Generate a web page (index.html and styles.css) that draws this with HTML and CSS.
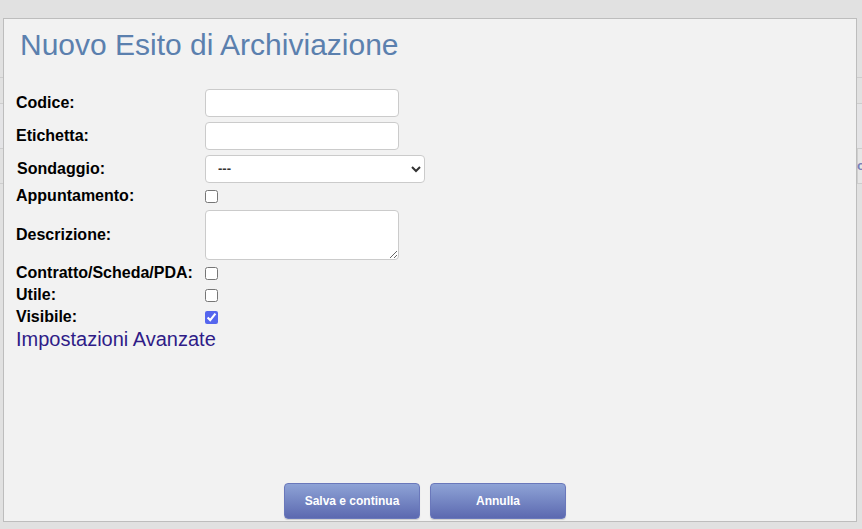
FILE: index.html
```html
<!DOCTYPE html>
<html lang="it">
<head>
<meta charset="utf-8">
<title>Nuovo Esito di Archiviazione</title>
<link rel="stylesheet" href="styles.css">
</head>
<body>
<div class="backdrop">
  <div class="bg-row r1"></div>
  <div class="bg-row r2"></div>
  <div class="bg-row r3"><span class="bg-text">o</span></div>
  <div class="bg-row r4"></div>
</div>

<div class="dialog">
  <h1 class="title">Nuovo Esito di Archiviazione</h1>
  <form class="form">
    <div class="row r-input">
      <label class="lbl" for="codice">Codice:</label>
      <input class="field" id="codice" type="text">
    </div>
    <div class="row r-input">
      <label class="lbl" for="etichetta">Etichetta:</label>
      <input class="field" id="etichetta" type="text">
    </div>
    <div class="row r-input">
      <label class="lbl lbl-s" for="sondaggio">Sondaggio:</label>
      <select class="sel" id="sondaggio"><option>---</option></select>
    </div>
    <div class="row r-check">
      <label class="lbl" for="app">Appuntamento:</label>
      <input class="chk" id="app" type="checkbox">
    </div>
    <div class="row r-area">
      <label class="lbl" for="desc">Descrizione:</label>
      <textarea class="area" id="desc"></textarea>
    </div>
    <div class="row r-check">
      <label class="lbl" for="pda">Contratto/Scheda/PDA:</label>
      <input class="chk" id="pda" type="checkbox">
    </div>
    <div class="row r-check">
      <label class="lbl" for="utile">Utile:</label>
      <input class="chk" id="utile" type="checkbox">
    </div>
    <div class="row r-check">
      <label class="lbl" for="vis">Visibile:</label>
      <input class="chk" id="vis" type="checkbox" checked>
    </div>
    <div class="advanced">Impostazioni Avanzate</div>
  </form>
  <div class="actions">
    <button class="btn" type="button">Salva e continua</button>
    <button class="btn" type="button">Annulla</button>
  </div>
</div>
</body>
</html>
```

FILE: styles.css
```css
html, body {
  margin: 0;
  padding: 0;
}

body {
  width: 862px;
  height: 529px;
  background: #e1e1e1;
  font-family: "Liberation Sans", Arial, sans-serif;
  overflow: hidden;
  position: relative;
}

.backdrop {
  padding-top: 77px;
}

.bg-row {
  border-top: 1px solid #cdcdcd;
  box-sizing: border-box;
  position: relative;
}

.r1 { height: 26px; }
.r2 { height: 45px; background: #e4e4e6; }
.r3 {
  height: 35px;
  background: linear-gradient(to right, transparent 857px, #cfcfcf 857px, #cfcfcf 858px, #e6e6e6 858px);
}
.r4 { height: 10px; }

.bg-text {
  display: block;
  text-align: right;
  margin-right: -3px;
  line-height: 33px;
  font-size: 13px;
  font-weight: bold;
  color: #7a80b8;
}

.dialog {
  position: absolute;
  left: 3px;
  top: 18px;
  width: 854px;
  height: 504px;
  box-sizing: border-box;
  border: 1px solid #bdbdbd;
  background: #f2f2f2;
  display: flex;
  flex-direction: column;
}

.title {
  margin: 9px 0 0 0;
  padding-left: 16px;
  font-size: 30px;
  font-weight: normal;
  line-height: 34px;
  color: #5b80ae;
}

.form {
  margin-top: 24px;
  padding-left: 12px;
}

.row {
  display: flex;
  align-items: center;
}

.r-input { height: 33px; }
.r-check { height: 22px; }
.r-area { height: 55px; }

.lbl {
  width: 189px;
  font-size: 16px;
  font-weight: bold;
  color: #000;
}

.lbl-s {
  padding-left: 1px;
  width: 188px;
}

.field {
  width: 194px;
  height: 28px;
  box-sizing: border-box;
  margin: 0;
  border: 1px solid #cbcbcb;
  border-radius: 4px;
  background: #fff;
}

.sel {
  width: 220px;
  height: 28px;
  box-sizing: border-box;
  margin: 0;
  border: 1px solid #cbcbcb;
  border-radius: 4px;
  background: #fff;
  padding-left: 8px;
  font-family: "Liberation Sans", Arial, sans-serif;
  font-size: 13px;
  font-weight: bold;
  color: #333;
}

.chk {
  width: 13px;
  height: 13px;
  margin: 0;
  accent-color: #5566ee;
}

.area {
  width: 194px;
  height: 50px;
  box-sizing: border-box;
  margin: 0;
  border: 1px solid #cbcbcb;
  border-radius: 4px;
  background: #fff;
}

.advanced {
  margin-left: 0;
  font-size: 20px;
  line-height: 23px;
  color: #2f1c88;
}

.actions {
  margin-top: auto;
  margin-bottom: 2px;
  display: flex;
  justify-content: center;
}

.btn {
  width: 136px;
  height: 36px;
  margin: 0 10px 0 0;
  border: 1px solid #6a78bb;
  border-radius: 4px;
  background: linear-gradient(#8ea3d6, #5c69b0);
  color: #fff;
  font-family: "Liberation Sans", Arial, sans-serif;
  font-size: 12px;
  font-weight: bold;
  box-shadow: 0 1px 1px rgba(0, 0, 0, 0.15);
}
```
